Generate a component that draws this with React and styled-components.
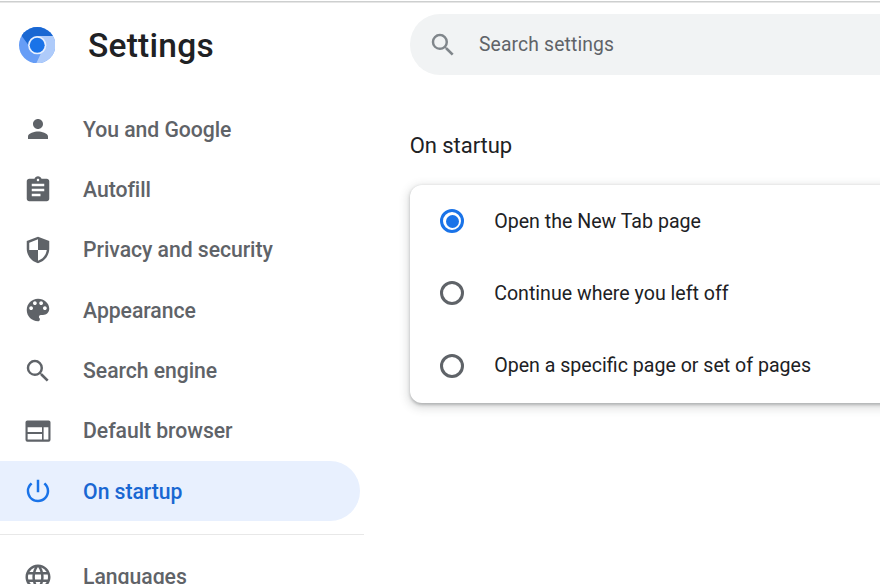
import React from "react";
import styled, { createGlobalStyle } from "styled-components";
import {
  MdPerson,
  MdAssignment,
  MdSearch,
  MdPowerSettingsNew,
  MdLanguage,
} from "react-icons/md";

const GlobalStyle = createGlobalStyle`
  * { box-sizing: border-box; }
  body { margin: 0; background: #fff; font-family: Roboto, sans-serif; overflow: hidden; }
`;

const Page = styled.div`
  height: 584px;
  display: flex;
  overflow: hidden;
  color: #202124;
  background: linear-gradient(#fff 1px, #cdcfcf 1px, #cdcfcf 2px, #e6e6e6 2px, #e6e6e6 3px, #fff 3px);
`;

const Sidebar = styled.aside`
  width: 409.7px;
  flex: none;
`;

const Brand = styled.header`
  height: 99.2px;
  padding: 26.7px 0 0 18.5px;
  display: flex;
  align-items: flex-start;

  svg { width: 36.4px; height: 36.4px; flex: none; }
`;

const Title = styled.h1`
  margin: 0 0 0 33.1px;
  font-size: 33.5px;
  line-height: 38px;
  font-weight: 500;
  letter-spacing: 0.25px;
`;

const NavItem = styled.a`
  display: flex;
  align-items: center;
  width: 360.4px;
  height: 60.3px;
  padding-left: 22.7px;
  border-radius: 0 30px 30px 0;
  color: ${(p) => (p.$active ? "#1a73e8" : "#5f6368")};
  background: ${(p) => (p.$active ? "#e8f0fe" : "transparent")};

  svg { width: 30px; height: 30px; flex: none; }
`;

const NavLabel = styled.span`
  margin-left: 30.4px;
  padding-top: 0.8px;
  font-size: 21.2px;
  line-height: 30px;
  font-weight: 500;
  white-space: nowrap;
  letter-spacing: -0.05px;
  color: ${(p) => (p.$active ? "#1967d2" : "inherit")};
`;

const Divider = styled.hr`
  width: 364px;
  height: 1.5px;
  margin: 12.6px 0 11.5px;
  border: 0;
  background: #e8e8e8;
`;

const Main = styled.main`
  flex: 1;
  min-width: 0;
  padding-top: 14.4px;
`;

const SearchBar = styled.div`
  width: 1020px;
  height: 60.4px;
  padding-left: 18.3px;
  display: flex;
  align-items: center;
  border-radius: 30.2px;
  background: #f1f3f4;
  color: #80868b;

  svg { width: 30px; height: 30px; }
`;

const SearchText = styled.span`
  margin-left: 21px;
  color: #5f6368;
  font-size: 19.3px;
  letter-spacing: 0.15px;
`;

const Heading = styled.h2`
  margin: 56.2px 0 23.9px;
  font-size: 22px;
  line-height: 30px;
  font-weight: 400;
  letter-spacing: -0.05px;
`;

const Card = styled.section`
  width: 1020px;
  height: 218px;
  border-radius: 12px;
  background: #fff;
  box-shadow: 0 1.5px 3px rgba(60, 64, 67, 0.3), 0 3px 9px 3px rgba(60, 64, 67, 0.15);
`;

const Option = styled.label`
  height: 72.3px;
  padding-left: 30.7px;
  display: flex;
  align-items: center;
`;

const Radio = styled.span`
  width: 24px;
  height: 24px;
  flex: none;
  display: grid;
  place-items: center;
  border: 3px solid ${(p) => (p.$checked ? "#1a73e8" : "#5f6368")};
  border-radius: 50%;

  &::after {
    content: "";
    width: 13px;
    height: 13px;
    border-radius: 50%;
    background: ${(p) => (p.$checked ? "#1a73e8" : "transparent")};
  }
`;

const OptionText = styled.span`
  margin-left: 29.8px;
  font-size: 19.6px;
  white-space: nowrap;
`;

const Logo = () => (
  <svg viewBox="0 0 36 36">
    <defs>
      <clipPath id="disc"><circle cx="18" cy="18" r="18" /></clipPath>
    </defs>
    <g clipPath="url(#disc)">
      <path d="M0 0H36V36H0Z" fill="#669df6" />
      <path d="M18 9H36V36H17L22 25.5L26 18Z" fill="#aecbfa" />
      <path d="M0 0H36V9H18A9 9 0 0 0 9.5 18L2 8Z" fill="#1967d2" />
    </g>
    <circle cx="18" cy="18" r="9" fill="#e8f0fe" />
    <circle cx="18" cy="18" r="7.4" fill="#1a73e8" />
  </svg>
);

const Glyph = ({ children }) => (
  <svg viewBox="0 0 24 24" fill="currentColor" fillRule="evenodd">{children}</svg>
);

const Shield = () => (
  <Glyph>
    <path d="M12 1.3 3 4.8v6.2c0 5.3 3.8 10.3 9 11.5 5.2-1.2 9-6.2 9-11.5V4.8ZM12 3.4V12H5V6.2ZM12 12h7c-.5 4-3.3 7.4-7 8.5Z" />
  </Glyph>
);

const Palette = () => (
  <Glyph>
    <path d="M12 3c-4.97 0-9 4.03-9 9s4.03 9 9 9c.83 0 1.5-.67 1.5-1.5 0-.39-.15-.74-.39-1.01-.23-.26-.38-.61-.38-.99 0-.83.67-1.5 1.5-1.5H16c2.76 0 5-2.24 5-5 0-4.42-4.03-8-9-8zm-5.5 9c-.83 0-1.5-.67-1.5-1.5S5.670 9 6.500 9 8 9.670 8 10.500 7.330 12 6.500 12zm3-4C8.670 8 8 7.330 8 6.500S8.670 5 9.500 5s1.500.670 1.500 1.500S10.330 8 9.500 8zm5 0c-.83 0-1.5-.67-1.5-1.5S13.670 5 14.500 5s1.500.670 1.500 1.500S15.330 8 14.500 8zm3 4c-.83 0-1.5-.67-1.5-1.5S16.670 9 17.500 9s1.500.670 1.500 1.500-.67 1.500-1.500 1.500z" />
  </Glyph>
);

const BrowserWindow = () => (
  <Glyph>
    <path d="M3.500 3.500h17A1.500 1.500 0 0 1 22 5v14a1.500 1.500 0 0 1-1.500 1.500h-17A1.500 1.500 0 0 1 2 19V5a1.500 1.500 0 0 1 1.500-1.500ZM3.700 9v3.700h11.500V9ZM3.700 14.300V18.800h11.500v-4.500ZM16.500 9v9.800h3.800V9Z" />
  </Glyph>
);

const items = [
  { label: "You and Google", Icon: MdPerson },
  { label: "Autofill", Icon: MdAssignment },
  { label: "Privacy and security", Icon: Shield },
  { label: "Appearance", Icon: Palette },
  { label: "Search engine", Icon: MdSearch },
  { label: "Default browser", Icon: BrowserWindow },
  { label: "On startup", Icon: MdPowerSettingsNew, active: true },
];

const options = [
  { label: "Open the New Tab page", checked: true },
  { label: "Continue where you left off" },
  { label: "Open a specific page or set of pages" },
];

function NavEntry({ label, Icon, active }) {
  return (
    <NavItem $active={active}>
      <Icon />
      <NavLabel $active={active}>{label}</NavLabel>
    </NavItem>
  );
}

export default function App() {
  return (
    <Page>
      <GlobalStyle />
      <Sidebar>
        <Brand>
          <Logo />
          <Title>Settings</Title>
        </Brand>
        <nav>
          {items.map((item) => <NavEntry key={item.label} {...item} />)}
          <Divider />
          <NavEntry label="Languages" Icon={MdLanguage} />
        </nav>
      </Sidebar>
      <Main>
        <SearchBar>
          <MdSearch />
          <SearchText>Search settings</SearchText>
        </SearchBar>
        <Heading>On startup</Heading>
        <Card>
          {options.map(({ label, checked }) => (
            <Option key={label}>
              <Radio $checked={checked} />
              <OptionText>{label}</OptionText>
            </Option>
          ))}
        </Card>
      </Main>
    </Page>
  );
}
